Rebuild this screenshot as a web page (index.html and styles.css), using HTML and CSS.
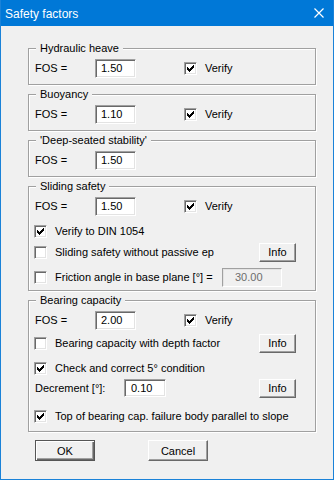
FILE: index.html
```html
<!DOCTYPE html>
<html lang="en">
<head>
    <meta charset="UTF-8">
    <title>Safety factors</title>
    <link rel="stylesheet" href="styles.css">
</head>
<body>

<div class="window">
    <div class="titlebar">
        <span class="title">Safety factors</span>
        <svg class="close" width="10" height="10" viewBox="0 0 10 10">
            <path d="M0.5 0.5L9.5 9.5M9.5 0.5L0.5 9.5" stroke="#fff" stroke-width="1.2" fill="none"/>
        </svg>
    </div>

    <div class="client">
        <fieldset class="group">
            <legend>Hydraulic heave</legend>
            <div class="row">
                <span class="label">FOS =</span>
                <input class="num" type="text" value="1.50">
                <label class="check verify"><span class="box"><svg viewBox="0 0 11 11"><use href="#tick"/></svg></span>Verify</label>
            </div>
        </fieldset>

        <fieldset class="group">
            <legend>Buoyancy</legend>
            <div class="row">
                <span class="label">FOS =</span>
                <input class="num" type="text" value="1.10">
                <label class="check verify"><span class="box"><svg viewBox="0 0 11 11"><use href="#tick"/></svg></span>Verify</label>
            </div>
        </fieldset>

        <fieldset class="group">
            <legend>'Deep-seated stability'</legend>
            <div class="row">
                <span class="label">FOS =</span>
                <input class="num" type="text" value="1.50">
            </div>
        </fieldset>

        <fieldset class="group sliding">
            <legend>Sliding safety</legend>
            <div class="row">
                <span class="label">FOS =</span>
                <input class="num" type="text" value="1.50">
                <label class="check verify"><span class="box"><svg viewBox="0 0 11 11"><use href="#tick"/></svg></span>Verify</label>
            </div>
            <div class="row mt5">
                <label class="check"><span class="box"><svg viewBox="0 0 11 11"><use href="#tick"/></svg></span>Verify to DIN 1054</label>
            </div>
            <div class="row mt1">
                <label class="check"><span class="box"></span>Sliding safety without passive ep</label>
                <button class="btn info">Info</button>
            </div>
            <div class="row mt5">
                <label class="check"><span class="box"></span>Friction angle in base plane [°] =</label>
                <input class="num off" type="text" value="30.00" disabled>
            </div>
        </fieldset>

        <fieldset class="group bearing">
            <legend>Bearing capacity</legend>
            <div class="row">
                <span class="label">FOS =</span>
                <input class="num" type="text" value="2.00">
                <label class="check verify"><span class="box"><svg viewBox="0 0 11 11"><use href="#tick"/></svg></span>Verify</label>
            </div>
            <div class="row">
                <label class="check"><span class="box"></span>Bearing capacity with depth factor</label>
                <button class="btn info">Info</button>
            </div>
            <div class="row mt5">
                <label class="check"><span class="box"><svg viewBox="0 0 11 11"><use href="#tick"/></svg></span>Check and correct 5° condition</label>
            </div>
            <div class="row mt0">
                <span class="label wide">Decrement [°]:</span>
                <input class="num dec" type="text" value="0.10">
                <button class="btn info">Info</button>
            </div>
            <div class="row mt8">
                <label class="check"><span class="box"><svg viewBox="0 0 11 11"><use href="#tick"/></svg></span>Top of bearing cap. failure body parallel to slope</label>
            </div>
        </fieldset>

        <div class="buttons">
            <button class="btn default">OK</button>
            <button class="btn">Cancel</button>
        </div>
    </div>
</div>

<!-- галочка для чекбоксов -->
<svg width="0" height="0" class="defs">
    <defs>
        <g id="tick" fill="#000">
            <rect x="2" y="4" width="1" height="3"/>
            <rect x="3" y="5" width="1" height="3"/>
            <rect x="4" y="6" width="1" height="3"/>
            <rect x="5" y="5" width="1" height="3"/>
            <rect x="6" y="4" width="1" height="3"/>
            <rect x="7" y="3" width="1" height="3"/>
            <rect x="8" y="2" width="1" height="3"/>
        </g>
    </defs>
</svg>

</body>
</html>
```

FILE: styles.css
```css
body {
    margin: 0;
    font-family: "Liberation Sans", Arial, sans-serif;
    font-size: 11px;
    color: #000;
}
.window {
    width: 334px;
    height: 480px;
    box-sizing: border-box;
    border: 1px solid #1a82d8;
    border-top: 0;
    background: #f0f0f0;
}
.titlebar {
    height: 26px;
    background: #0078d7;
    display: flex;
    align-items: center;
    justify-content: space-between;
    padding: 0 9px 0 4px;
}
.title {
    color: #fff;
    font-size: 12px;
    padding-top: 1px;
}
.close {
    display: block;
}
.client {
    padding: 16px 0 0 27px;
}
.group {
    width: 288px;
    box-sizing: border-box;
    margin: 0 0 3px;
    padding: 0 5px 6px;
    border: 1px solid #a0a0a0;
    box-shadow: inset 1px 1px 0 #fff, 1px 1px 0 #fff;
    min-width: 0;
}
.group legend {
    margin-left: 2px;
    padding: 0 4px;
    line-height: 13px;
    background: #f0f0f0;
}
.sliding {
    padding-bottom: 3px;
}
.bearing {
    padding-bottom: 5px;
}
.row {
    display: flex;
    align-items: center;
    height: 20px;
    margin-top: 3px;
}
.mt0 { margin-top: 0; }
.mt1 { margin-top: 1px; }
.mt5 { margin-top: 5px; }
.mt8 { margin-top: 8px; }
.label {
    width: 61px;
    padding-left: 1px;
    box-sizing: border-box;
}
.label.wide {
    width: 90px;
}
.num {
    width: 41px;
    height: 19px;
    box-sizing: border-box;
    margin: 0;
    padding: 0 0 0 5px;
    border: 1px solid;
    border-color: #a0a0a0 #fff #fff #a0a0a0;
    box-shadow: inset 1px 1px 0 #696969, inset -1px -1px 0 #e3e3e3;
    background: #fff;
    font-family: inherit;
    font-size: 11px;
    color: #000;
    outline: none;
}
.num.dec {
    width: 42px;
    height: 18px;
    padding-left: 6px;
}
.num.off {
    width: 60px;
    margin-left: auto;
    margin-right: 28px;
    padding-left: 12px;
    background: #f0f0f0;
    color: #6d6d6d;
    box-shadow: inset 1px 1px 0 #e3e3e3;
}
.check {
    display: flex;
    align-items: center;
    gap: 8px;
}
.verify {
    margin-left: 48px;
}
.box {
    width: 13px;
    height: 13px;
    box-sizing: border-box;
    border: 1px solid;
    border-color: #a0a0a0 #fff #fff #a0a0a0;
    box-shadow: inset 1px 1px 0 #696969, inset -1px -1px 0 #e3e3e3;
    background: #fff;
}
.box svg {
    display: block;
    width: 11px;
    height: 11px;
    shape-rendering: crispEdges;
}
.defs {
    position: absolute;
}
.btn {
    height: 21px;
    width: 60px;
    box-sizing: border-box;
    margin: 0;
    padding: 0;
    border: 1px solid;
    border-color: #fff #696969 #696969 #fff;
    box-shadow: inset -1px -1px 0 #a0a0a0;
    background: #f0f0f0;
    font-family: inherit;
    font-size: 11px;
    color: #000;
}
.btn.default {
    border-color: #555;
    box-shadow: inset 1px 1px 0 #fff, inset -1px -1px 0 #696969, inset -2px -2px 0 #a0a0a0;
}
.btn.info {
    width: 37px;
    height: 19px;
    margin-left: auto;
    margin-right: 14px;
}
.buttons {
    display: flex;
    gap: 53px;
    margin-top: 8px;
    padding-left: 7px;
}
```
